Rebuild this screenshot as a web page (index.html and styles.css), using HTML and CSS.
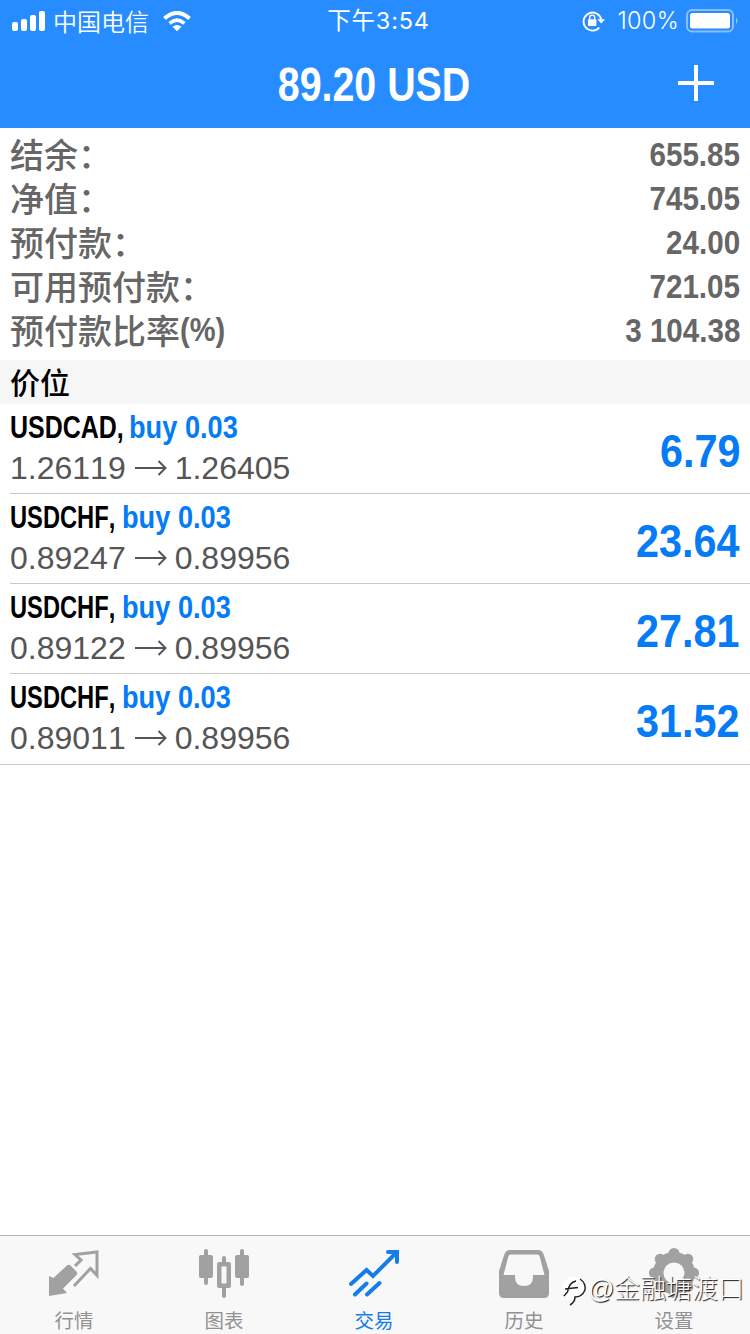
FILE: index.html
```html
<!DOCTYPE html>
<html lang="zh-CN">
<head>
<meta charset="utf-8">
<title>交易</title>
<link rel="stylesheet" href="styles.css">
</head>
<body>
<div class="app">
  <header class="header">
    <div class="status">
      <div class="status-left">
        <svg class="signal" width="34" height="21" viewBox="0 0 34 21" fill="#fff"><rect x="0" y="11" width="6" height="9" rx="2"/><rect x="9" y="8" width="6" height="12" rx="2"/><rect x="18" y="4" width="6" height="16" rx="2"/><rect x="27" y="0" width="6" height="20" rx="2"/></svg>
        <span class="carrier">中国电信</span>
        <svg class="wifi" width="28" height="21" viewBox="0 0 28 21"><path d="M1.5 7.4Q14-3.6 26.5 7.4" fill="none" stroke="#fff" stroke-width="4"/><path d="M6.6 12.3Q14 6 21.400 12.300" fill="none" stroke="#fff" stroke-width="3.600"/><path d="M9.500 15.700Q14 12.200 18.500 15.700L14 20.300Z" fill="#fff"/></svg>
      </div>
      <span class="time">下午3:54</span>
      <div class="status-right">
        <svg width="24" height="22" viewBox="0 0 24 22"><path d="M17.200 17.700A9 9 0 1 1 19.200 9" fill="none" stroke="#fff" stroke-width="1.900"/><path d="M15.400 9.300H23L19.200 13.600Z" fill="#fff"/><rect x="6" y="9.300" width="8.400" height="6.600" rx="1" fill="#fff"/><path d="M7.700 10V7.600a2.500 2.500 0 0 1 5 0V10" fill="none" stroke="#fff" stroke-width="1.400"/></svg>
        <span class="percent">100%</span>
        <svg class="battery" width="53" height="24" viewBox="0 0 53 24"><rect x="1" y="1" width="46" height="21.500" rx="5" fill="none" stroke="#fff" stroke-opacity=".45" stroke-width="2"/><rect x="4" y="4" width="40" height="15.500" rx="2.500" fill="#fff"/><path d="M50 8.500q3 3.300 0 6.600z" fill="#fff" fill-opacity=".55"/></svg>
      </div>
    </div>
    <div class="titlebar">
      <h1 class="title">89.20 USD</h1>
      <svg class="add" width="36" height="36" viewBox="0 0 36 36"><path d="M18 0V36M0 18H36" stroke="#fff" stroke-width="4"/></svg>
    </div>
  </header>

  <section class="summary">
    <div class="line"><span>结余<i class="colon">：</i></span><b>655.85</b></div>
    <div class="line"><span>净值<i class="colon">：</i></span><b>745.05</b></div>
    <div class="line"><span>预付款<i class="colon">：</i></span><b>24.00</b></div>
    <div class="line"><span>可用预付款<i class="colon">：</i></span><b>721.05</b></div>
    <div class="line"><span class="ratio">预付款比率<em class="unit">(%)</em></span><b>3 104.38</b></div>
  </section>

  <h2 class="section">价位</h2>

  <main class="positions">
    <article class="position">
      <div class="deal"><div class="name"><span class="symbol cad">USDCAD,</span><span class="side">buy 0.03</span></div>
      <div class="prices"><span>1.26119</span><svg class="arrow" width="32" height="16" viewBox="0 0 32 16"><path d="M0 8H30M23.500 1L30.500 8L23.500 15"/></svg><span>1.26405</span></div></div>
      <strong class="profit">6.79</strong>
    </article>
    <article class="position">
      <div class="deal"><div class="name"><span class="symbol chf">USDCHF,</span><span class="side">buy 0.03</span></div>
      <div class="prices"><span>0.89247</span><svg class="arrow" width="32" height="16" viewBox="0 0 32 16"><path d="M0 8H30M23.500 1L30.500 8L23.500 15"/></svg><span>0.89956</span></div></div>
      <strong class="profit">23.64</strong>
    </article>
    <article class="position">
      <div class="deal"><div class="name"><span class="symbol chf">USDCHF,</span><span class="side">buy 0.03</span></div>
      <div class="prices"><span>0.89122</span><svg class="arrow" width="32" height="16" viewBox="0 0 32 16"><path d="M0 8H30M23.500 1L30.500 8L23.500 15"/></svg><span>0.89956</span></div></div>
      <strong class="profit">27.81</strong>
    </article>
    <article class="position">
      <div class="deal"><div class="name"><span class="symbol chf">USDCHF,</span><span class="side">buy 0.03</span></div>
      <div class="prices"><span>0.89011</span><svg class="arrow" width="32" height="16" viewBox="0 0 32 16"><path d="M0 8H30M23.500 1L30.500 8L23.500 15"/></svg><span>0.89956</span></div></div>
      <strong class="profit">31.52</strong>
    </article>
  </main>

  <nav class="tabs">
    <div class="tab">
      <svg width="52" height="52" viewBox="0 0 52 52"><path d="M1 28L5.500 30L19.500 17Q21.500 16 23 18L28.500 23.500Q30 25.500 28.500 27L15 40.500L19 45L1 48Z" fill="#a1a1a1"/><path d="M27 18L33 12L27 6.500L49 4V27.500L42.500 20.500L26 38" fill="none" stroke="#a1a1a1" stroke-width="3"/></svg>
      <span>行情</span>
    </div>
    <div class="tab">
      <svg width="52" height="52" viewBox="0 0 52 52" fill="#a1a1a1"><rect x="6" y="1" width="4" height="36" rx="2"/><rect x="1" y="7" width="14" height="23" rx="2"/><rect x="42" y="1" width="4" height="37" rx="2"/><rect x="37" y="7" width="14" height="23" rx="2"/><rect x="24" y="8" width="4" height="42" rx="2"/><rect x="19" y="14" width="14" height="26" rx="2"/><rect x="23.500" y="18.500" width="5" height="17" fill="#f8f8f8"/></svg>
      <span>图表</span>
    </div>
    <div class="tab active">
      <svg width="52" height="52" viewBox="0 0 52 52" fill="none" stroke="#147de8" stroke-width="4" stroke-linecap="round"><path d="M3 36L18.500 22L25 28L48 5M40 4H49V14M7 46.500L18.500 35.500M19 46.500L31.500 35"/></svg>
      <span>交易</span>
    </div>
    <div class="tab">
      <svg width="52" height="52" viewBox="0 0 52 52"><path fill="#a1a1a1" fill-rule="evenodd" d="M12 2H40Q44 2 45.500 6L51 23V45Q51 50 46 50H6Q1 50 1 45V23L6.500 6Q8 2 12 2ZM13 6.500Q11 6.500 10.300 8.500L5.500 27H17V29Q17 38 26 38T35 29V27H46.500L41.700 8.500Q41 6.500 39 6.500Z"/></svg>
      <span>历史</span>
    </div>
    <div class="tab">
      <svg width="52" height="52" viewBox="0 0 52 52"><g fill="#a1a1a1"><circle cx="26" cy="25" r="21"/><g id="teeth"><circle cx="26" cy="5.500" r="5.500"/><circle cx="26" cy="44.500" r="5.500"/><circle cx="6.500" cy="25" r="5.500"/><circle cx="45.500" cy="25" r="5.500"/></g><use href="#teeth" transform="rotate(45 26 25)"/></g><circle cx="26" cy="25" r="10.500" fill="#f8f8f8"/></svg>
      <span>设置</span>
    </div>
    <div class="watermark">
      <svg width="26" height="32" viewBox="0 0 26 32"><path d="M0 14Q1 2 12 1.500Q24 3 24 14Q23 22 14 24L8 30L7 24Q0 21 0 14Z" fill="#fff"/><path d="M2 21L5.500 17Q7 7.500 14 6M3 14L16 12.500M18 4Q24 8 23 15Q20 22 13 22Q13 27 8 30" fill="none" stroke="#222" stroke-width="1.500"/></svg>
      <span class="at">@</span><span class="handle">金融塘渡口</span>
    </div>
  </nav>
</div>
</body>
</html>
```
FILE: styles.css
```css
* { box-sizing: border-box; }
body {
  margin: 0;
  background: #fff;
  font-family: "Liberation Sans", "Noto Sans CJK SC", sans-serif;
  font-kerning: none;
}
svg { display: block; flex: none; }
.app { width: 750px; height: 1334px; display: flex; flex-direction: column; overflow: hidden; }

.header { height: 128px; flex: none; background: #278cff; color: #fff; }
.status { height: 40px; display: grid; grid-template-columns: 1fr auto 1fr; align-items: center; padding: 0 11px 0 12px; font-size: 24px; line-height: 40px; }
.status-left, .status-right { display: flex; align-items: center; }
.status-right { justify-content: flex-end; }
.signal { margin-right: 7px; }
.carrier { font-family: "Noto Sans CJK SC", sans-serif; font-weight: 350; line-height: 40px; padding-bottom: 1px; }
.wifi { margin-left: 14px; }
.time { font-family: Inter, "Noto Sans CJK SC", sans-serif; font-size: 23.5px; letter-spacing: .8px; line-height: 42px; transform: translateX(3px); }
.percent { font-family: Inter, sans-serif; font-size: 23.5px; font-weight: 300; line-height: 42px; letter-spacing: .3px; margin: 0 7px 0 12px; }
.titlebar { height: 88px; display: grid; grid-template-columns: 1fr auto 1fr; align-items: center; padding-right: 36px; }
.title { grid-column: 2; width: 200px; margin: 0 0 0 34px; padding-top: 2px; font-size: 48px; line-height: 86px; display: flex; justify-content: center; white-space: nowrap; transform: scaleX(.82); }
.add { justify-self: end; margin-bottom: 2px; }

.summary { height: 232px; flex: none; padding: 4px 10px 0; color: #666; }
.line { height: 44px; display: flex; justify-content: space-between; align-items: center; font-size: 34px; line-height: 44px; }
.line span { display: flex; height: 44px; font-family: "Noto Sans CJK SC", sans-serif; font-weight: 500; line-height: 43px; white-space: nowrap; }
.line b { transform: scaleX(.87); transform-origin: right; }
.colon { font-style: normal; line-height: 44px; }
.unit { display: inline-block; font: bold 33px/44px "Liberation Sans", sans-serif; transform: scaleX(.88); transform-origin: left; }

.section { height: 44px; flex: none; margin: 0; padding-left: 10px; background: #f6f6f6; font: 500 30px/42px "Noto Sans CJK SC", sans-serif; }

.position { height: 90px; margin-left: 10px; padding-right: 10px; display: flex; justify-content: space-between; border-bottom: 1px solid #c8c8c8; }
.position:last-child { height: 91px; margin-left: 0; padding-left: 10px; }
.name { height: 42px; padding-top: 3px; display: flex; font-size: 32px; line-height: 40px; font-weight: bold; white-space: nowrap; }
.symbol { transform-origin: left; }
.cad { width: 119px; transform: scaleX(.78); }
.chf { width: 112px; transform: scaleX(.74); }
.side { color: #057bf5; transform: scaleX(.85); transform-origin: left; }
.prices { display: flex; align-items: center; height: 44px; font-size: 32px; color: #555; }
.arrow { margin: 0 8px 0 9px; fill: none; stroke: #555; stroke-width: 2; }
.profit { color: #057bf5; font-size: 47px; line-height: 93px; transform: scaleX(.88); transform-origin: right; }

.tabs { position: relative; margin-top: auto; height: 99px; flex: none; display: grid; grid-template-columns: repeat(5, 150px); border-top: 1px solid #b2b2b2; background: #f8f8f8; }
.tab { display: flex; flex-direction: column; align-items: center; padding: 12px 2px 0 0; color: #929292; font: 400 19.5px/30px "Noto Sans CJK SC", sans-serif; }
.tab span { margin-top: 5px; }
.active { color: #147de8; }
.watermark { position: absolute; left: 562px; top: 39px; height: 32px; display: flex; align-items: center; color: #fff; font: 300 26px/28px "Noto Sans CJK SC", sans-serif; text-shadow: 1px 1px 1px #111; white-space: nowrap; }
.at { font-family: "Liberation Sans", sans-serif; width: 26px; margin-bottom: 5px; }
.handle { margin-bottom: 8px; }
```
